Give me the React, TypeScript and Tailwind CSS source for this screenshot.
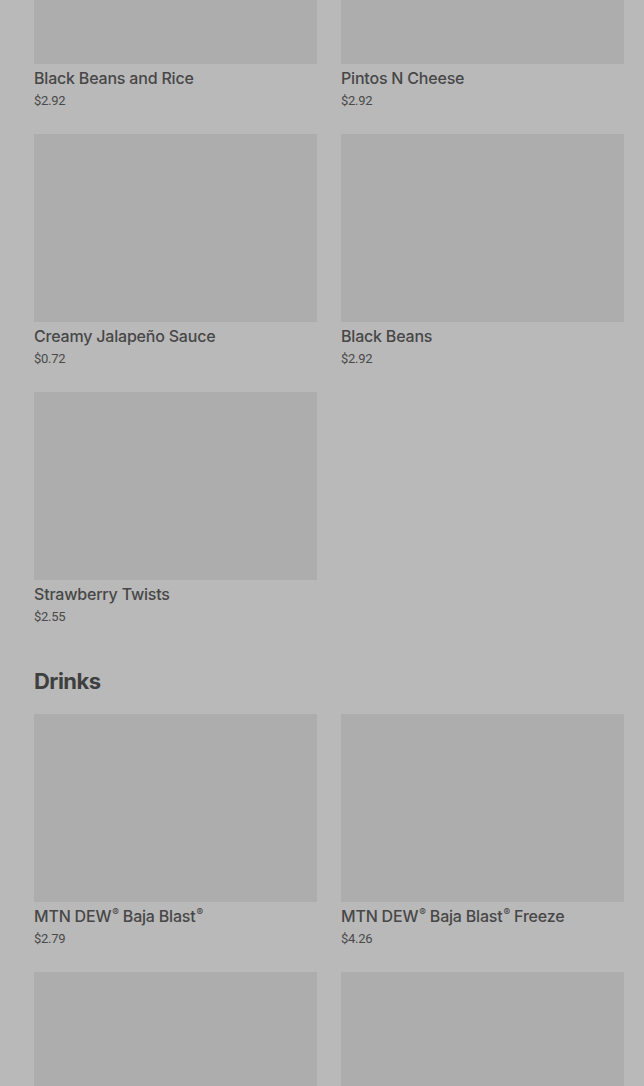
import React from 'react'

type Item = { name: React.ReactNode; price: string }

const R = () => <span className="relative -top-[6px] ml-[1px] text-[10px] leading-none">®</span>

const sides: Item[] = [
  { name: 'Black Beans and Rice', price: '$2.92' },
  { name: 'Pintos N Cheese', price: '$2.92' },
  { name: 'Creamy Jalapeño Sauce', price: '$0.72' },
  { name: 'Black Beans', price: '$2.92' },
  { name: 'Strawberry Twists', price: '$2.55' },
]

const drinks: Item[] = [
  { name: <>MTN DEW<R /> Baja Blast<R /></>, price: '$2.79' },
  { name: <>MTN DEW<R /> Baja Blast<R /> Freeze</>, price: '$4.26' },
]

function Card({ item }: { item: Item }) {
  return (
    <div className="flex flex-col">
      <div className="h-[188px] w-full bg-[#adadad]" />
      <p className="mt-[2px] text-[16px] leading-[24px] font-medium text-[#474747]" style={{ fontFamily: 'Inter, Roboto, sans-serif', letterSpacing: '-0.2px' }}>
        {item.name}
      </p>
      <p className="mt-[1px] text-[13px] leading-[20px] text-[#4a4a4a]" style={{ letterSpacing: '-0.3px' }}>{item.price}</p>
    </div>
  )
}

export default function App() {
  return (
    <div
      className="h-[1086px] overflow-hidden bg-[#b9b9b9]"
      style={{ fontFamily: 'Roboto, "Liberation Sans", sans-serif' }}
    >
      <div className="-mt-[124px] pl-[34px] pr-[20px]">
        <div className="grid grid-cols-2 gap-x-[24px] gap-y-[23px]">
          {sides.map((s, i) => (
            <Card key={i} item={s} />
          ))}
        </div>

        <h2
          className="mt-[38px] mb-[17px] text-[22px] leading-[32px] font-bold tracking-tight text-[#3f3f3f]"
          style={{ fontFamily: 'Inter, Roboto, sans-serif' }}
        >
          Drinks
        </h2>

        <div className="grid grid-cols-2 gap-x-[24px] gap-y-[23px]">
          {drinks.map((d, i) => (
            <Card key={i} item={d} />
          ))}
          <div className="h-[188px] bg-[#adadad]" />
          <div className="h-[188px] bg-[#adadad]" />
        </div>
      </div>
    </div>
  )
}
